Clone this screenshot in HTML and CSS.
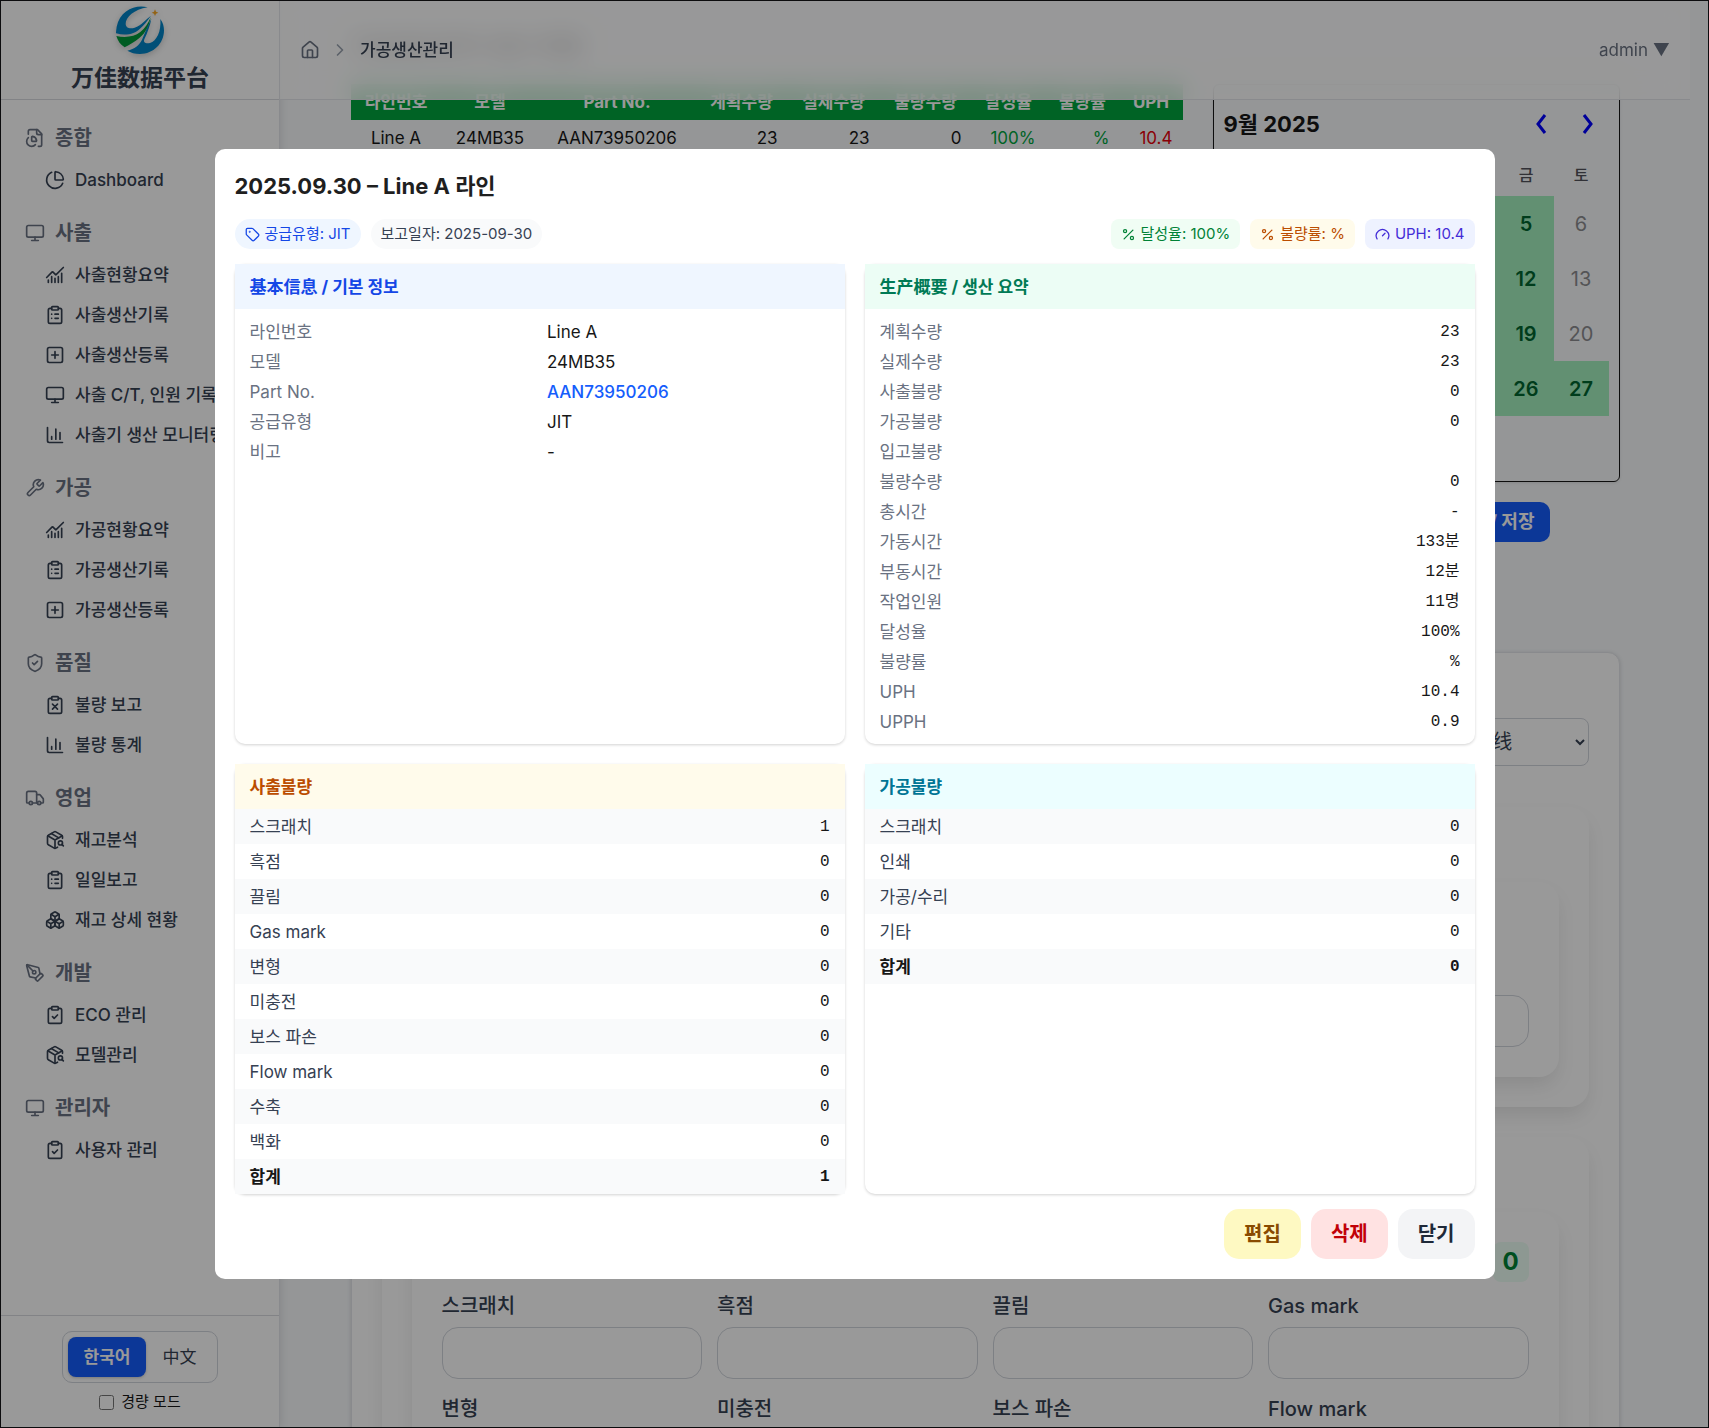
FILE: index.html
```html
<!DOCTYPE html>
<html lang="ko">
<head>
<meta charset="utf-8">
<title>万佳数据平台</title>
<link rel="stylesheet" href="styles.css">
</head>
<body>
<svg class="sprite" aria-hidden="true">
  <symbol id="i-file-pie" viewBox="0 0 24 24"><path d="M14 2v4a2 2 0 0 0 2 2h4"/><path d="M16 22h2a2 2 0 0 0 2-2V7l-5-5H6a2 2 0 0 0-2 2v3.5"/><path d="M4.017 11.512a6 6 0 1 0 8.466 8.475"/><path d="M9 16a1 1 0 0 1-1-1v-4c0-.552.45-1.008.995-.917a6 6 0 0 1 4.922 4.922c.091.544-.365.995-.917.995z"/></symbol>
  <symbol id="i-pie" viewBox="0 0 24 24"><path d="M21 12c.552 0 1.005-.449.95-.998a10 10 0 0 0-8.953-8.951c-.55-.055-.998.398-.998.95v8a1 1 0 0 0 1 1z"/><path d="M21.21 15.89A10 10 0 1 1 8 2.83"/></symbol>
  <symbol id="i-monitor" viewBox="0 0 24 24"><rect width="20" height="14" x="2" y="3" rx="2"/><path d="M8 21h8M12 17v4"/></symbol>
  <symbol id="i-trend" viewBox="0 0 24 24"><path d="M12 16v5M16 14v7M20 10v11"/><path d="m22 3-8.646 8.646a.5.5 0 0 1-.708 0L9.354 8.354a.5.5 0 0 0-.707 0L2 15"/><path d="M4 18v3M8 14v7"/></symbol>
  <symbol id="i-clip-list" viewBox="0 0 24 24"><rect width="8" height="4" x="8" y="2" rx="1"/><path d="M16 4h2a2 2 0 0 1 2 2v14a2 2 0 0 1-2 2H6a2 2 0 0 1-2-2V6a2 2 0 0 1 2-2h2"/><path d="M12 11h4M12 16h4M8 11h.01M8 16h.01"/></symbol>
  <symbol id="i-clip-check" viewBox="0 0 24 24"><rect width="8" height="4" x="8" y="2" rx="1"/><path d="M16 4h2a2 2 0 0 1 2 2v14a2 2 0 0 1-2 2H6a2 2 0 0 1-2-2V6a2 2 0 0 1 2-2h2"/><path d="m9 14 2 2 4-4"/></symbol>
  <symbol id="i-clip-x" viewBox="0 0 24 24"><rect width="8" height="4" x="8" y="2" rx="1"/><path d="M16 4h2a2 2 0 0 1 2 2v14a2 2 0 0 1-2 2H6a2 2 0 0 1-2-2V6a2 2 0 0 1 2-2h2"/><path d="m15 11-6 6M9 11l6 6"/></symbol>
  <symbol id="i-plus" viewBox="0 0 24 24"><rect width="18" height="18" x="3" y="3" rx="2"/><path d="M8 12h8M12 8v8"/></symbol>
  <symbol id="i-bars" viewBox="0 0 24 24"><path d="M3 3v16a2 2 0 0 0 2 2h16"/><path d="M18 17V9M13 17V5M8 17v-3"/></symbol>
  <symbol id="i-wrench" viewBox="0 0 24 24"><path d="M14.7 6.3a1 1 0 0 0 0 1.4l1.6 1.6a1 1 0 0 0 1.4 0l3.77-3.77a6 6 0 0 1-7.94 7.94l-6.91 6.91a2.12 2.12 0 0 1-3-3l6.91-6.91a6 6 0 0 1 7.94-7.94l-3.76 3.76z"/></symbol>
  <symbol id="i-shield" viewBox="0 0 24 24"><path d="M20 13c0 5-3.5 7.5-7.66 8.95a1 1 0 0 1-.67-.01C7.5 20.5 4 18 4 13V6a1 1 0 0 1 1-1c2 0 4.5-1.2 6.24-2.72a1.17 1.17 0 0 1 1.52 0C14.51 3.81 17 5 19 5a1 1 0 0 1 1 1z"/><path d="m9 12 2 2 4-4"/></symbol>
  <symbol id="i-truck" viewBox="0 0 24 24"><path d="M14 18V6a2 2 0 0 0-2-2H4a2 2 0 0 0-2 2v11a1 1 0 0 0 1 1h2"/><path d="M15 18H9"/><path d="M19 18h2a1 1 0 0 0 1-1v-3.65a1 1 0 0 0-.22-.624l-3.48-4.35A1 1 0 0 0 17.52 8H14"/><circle cx="17" cy="18" r="2"/><circle cx="7" cy="18" r="2"/></symbol>
  <symbol id="i-package" viewBox="0 0 24 24"><path d="M21 10V8a2 2 0 0 0-1-1.73l-7-4a2 2 0 0 0-2 0l-7 4A2 2 0 0 0 3 8v8a2 2 0 0 0 1 1.73l7 4a2 2 0 0 0 2 0l2-1.14"/><path d="m7.5 4.27 9 5.15"/><path d="M3.29 7 12 12l8.71-5M12 22V12"/><circle cx="18.5" cy="15.5" r="2.5"/><path d="M20.27 17.27 22 19"/></symbol>
  <symbol id="i-boxes" viewBox="0 0 24 24"><path d="M2.97 12.92A2 2 0 0 0 2 14.63v3.24a2 2 0 0 0 .97 1.71l3 1.8a2 2 0 0 0 2.06 0L12 19v-5.5l-5-3-4.03 2.42Z"/><path d="m7 16.5-4.74-2.85M7 16.5l5-3M7 16.5v5.17"/><path d="M12 13.5V19l3.97 2.38a2 2 0 0 0 2.06 0l3-1.8a2 2 0 0 0 .97-1.71v-3.24a2 2 0 0 0-.97-1.71L17 10.5l-5 3Z"/><path d="m17 16.5-5-3M17 16.5l4.74-2.85M17 16.5v5.17"/><path d="M7.97 4.42A2 2 0 0 0 7 6.13v4.37l5 3 5-3V6.13a2 2 0 0 0-.97-1.71l-3-1.8a2 2 0 0 0-2.06 0l-3 1.8Z"/><path d="M12 8 7.26 5.15M12 8l4.74-2.85M12 13.5V8"/></symbol>
  <symbol id="i-pen" viewBox="0 0 24 24"><path d="M15.707 21.293a1 1 0 0 1-1.414 0l-1.586-1.586a1 1 0 0 1 0-1.414l5.586-5.586a1 1 0 0 1 1.414 0l1.586 1.586a1 1 0 0 1 0 1.414z"/><path d="m18 13-1.375-6.874a1 1 0 0 0-.746-.776L3.235 2.028a1 1 0 0 0-1.207 1.207L5.35 15.879a1 1 0 0 0 .776.746L13 18"/><path d="m2.3 2.3 7.286 7.286"/><circle cx="11" cy="11" r="2"/></symbol>
  <symbol id="i-house" viewBox="0 0 24 24"><path d="M15 21v-8a1 1 0 0 0-1-1h-4a1 1 0 0 0-1 1v8"/><path d="M3 10a2 2 0 0 1 .709-1.528l7-5.999a2 2 0 0 1 2.582 0l7 5.999A2 2 0 0 1 21 10v9a2 2 0 0 1-2 2H5a2 2 0 0 1-2-2z"/></symbol>
  <symbol id="i-right" viewBox="0 0 24 24"><path d="m9 18 6-6-6-6"/></symbol>
  <symbol id="i-tag" viewBox="0 0 24 24"><path d="M12.586 2.586A2 2 0 0 0 11.172 2H4a2 2 0 0 0-2 2v7.172a2 2 0 0 0 .586 1.414l8.704 8.704a2.426 2.426 0 0 0 3.42 0l6.58-6.58a2.426 2.426 0 0 0 0-3.42z"/><circle cx="7.5" cy="7.5" r=".5"/></symbol>
  <symbol id="i-percent" viewBox="0 0 24 24"><path d="M19 5 5 19"/><circle cx="6.5" cy="6.5" r="2.5"/><circle cx="17.5" cy="17.5" r="2.5"/></symbol>
  <symbol id="i-gauge" viewBox="0 0 24 24"><path d="m12 14 4-4"/><path d="M3.34 19a10 10 0 1 1 17.32 0"/></symbol>
</svg>

<div class="app">
  <aside class="sidebar">
    <div class="brand">
      <svg class="brand-logo" viewBox="0 0 144 144" aria-hidden="true">
        <path fill="#0284c7" d="M95 4C60-6 12 12 2 62c-1 8-2 14-2 20 30 8 56 2 72-14 12-11 22-23 33-39C90 40 76 58 56 65c-14 4-27 1-27-12C29 34 54 10 95 4z"/>
        <path fill="#009a3a" d="M1 90c28 6 54 2 72-12 14-11 24-26 31-44-4 26-16 48-34 62-14 11-28 20-44 28C13 116 5 104 1 90z"/>
        <path fill="#0284c7" d="M106 38c-4 22-12 42-21 62-4 10 5 14 17 11 20-6 34-34 31-72 8 11 11 22 11 34 0 40-32 71-72 71-15 0-28-4-38-10 22-6 36-16 44-33 8-19 16-40 28-63z"/>
        <path fill="#f5a623" d="M117 10l3 7 7 3-7 3-3 7-3-7-7-3 7-3z"/>
      </svg>
      <h1 class="brand-name">万佳数据平台</h1>
    </div>
    <nav class="nav">
      <section>
        <h2><svg class="icon"><use href="#i-file-pie"/></svg>종합</h2>
        <a href="#"><svg class="icon"><use href="#i-pie"/></svg>Dashboard</a>
      </section>
      <section>
        <h2><svg class="icon"><use href="#i-monitor"/></svg>사출</h2>
        <a href="#"><svg class="icon"><use href="#i-trend"/></svg>사출현황요약</a>
        <a href="#"><svg class="icon"><use href="#i-clip-list"/></svg>사출생산기록</a>
        <a href="#"><svg class="icon"><use href="#i-plus"/></svg>사출생산등록</a>
        <a href="#"><svg class="icon"><use href="#i-monitor"/></svg>사출 C/T, 인원 기록</a>
        <a href="#"><svg class="icon"><use href="#i-bars"/></svg>사출기 생산 모니터링</a>
      </section>
      <section>
        <h2><svg class="icon"><use href="#i-wrench"/></svg>가공</h2>
        <a href="#"><svg class="icon"><use href="#i-trend"/></svg>가공현황요약</a>
        <a href="#"><svg class="icon"><use href="#i-clip-list"/></svg>가공생산기록</a>
        <a href="#"><svg class="icon"><use href="#i-plus"/></svg>가공생산등록</a>
      </section>
      <section>
        <h2><svg class="icon"><use href="#i-shield"/></svg>품질</h2>
        <a href="#"><svg class="icon"><use href="#i-clip-x"/></svg>불량 보고</a>
        <a href="#"><svg class="icon"><use href="#i-bars"/></svg>불량 통계</a>
      </section>
      <section>
        <h2><svg class="icon"><use href="#i-truck"/></svg>영업</h2>
        <a href="#"><svg class="icon"><use href="#i-package"/></svg>재고분석</a>
        <a href="#"><svg class="icon"><use href="#i-clip-list"/></svg>일일보고</a>
        <a href="#"><svg class="icon"><use href="#i-boxes"/></svg>재고 상세 현황</a>
      </section>
      <section>
        <h2><svg class="icon"><use href="#i-pen"/></svg>개발</h2>
        <a href="#"><svg class="icon"><use href="#i-clip-check"/></svg>ECO 관리</a>
        <a href="#"><svg class="icon"><use href="#i-package"/></svg>모델관리</a>
      </section>
      <section>
        <h2><svg class="icon"><use href="#i-monitor"/></svg>관리자</h2>
        <a href="#"><svg class="icon"><use href="#i-clip-check"/></svg>사용자 관리</a>
      </section>
    </nav>
    <div class="side-foot">
      <div class="lang">
        <button type="button" class="lang-on">한국어</button>
        <button type="button">中文</button>
      </div>
      <label class="light-mode"><input type="checkbox">경량 모드</label>
    </div>
  </aside>

  <div class="main">
    <header class="topbar">
      <nav class="crumbs">
        <a href="#" aria-label="Home"><svg class="icon"><use href="#i-house"/></svg></a>
        <svg class="icon crumb-sep"><use href="#i-right"/></svg>
        <span>가공생산관리</span>
      </nav>
      <button type="button" class="user">admin ▼</button>
    </header>

    <main class="page">
      <h2 class="page-title">가공생산관리 생산 현황</h2>
      <div class="overview">
        <table class="records">
          <colgroup><col class="c-line"><col class="c-model"><col class="c-part"><col class="c-qty"><col class="c-qty"><col class="c-qty"><col class="c-rate"><col class="c-rate"><col></colgroup>
          <thead><tr><th>라인번호</th><th>모델</th><th>Part No.</th><th>계획수량</th><th>실제수량</th><th>불량수량</th><th>달성율</th><th>불량률</th><th>UPH</th></tr></thead>
          <tbody><tr><td>Line A</td><td>24MB35</td><td>AAN73950206</td><td class="num">23</td><td class="num">23</td><td class="num">0</td><td class="num good">100%</td><td class="num good">%</td><td class="num bad">10.4</td></tr></tbody>
        </table>
        <section class="calendar">
          <div class="cal-head">
            <strong>9월 2025</strong>
            <div class="cal-nav">
              <button type="button" aria-label="이전 달"><svg viewBox="0 0 12 20"><path d="M10 1 3 10l7 9"/></svg></button>
              <button type="button" aria-label="다음 달"><svg viewBox="0 0 12 20"><path d="m2 1 7 9-7 9"/></svg></button>
            </div>
          </div>
          <table class="days">
            <thead><tr><th>일</th><th>월</th><th>화</th><th>수</th><th>목</th><th>금</th><th>토</th></tr></thead>
            <tbody>
              <tr><td></td><td class="has">1</td><td class="has">2</td><td class="has">3</td><td class="has">4</td><td class="has">5</td><td>6</td></tr>
              <tr><td>7</td><td class="has">8</td><td class="has">9</td><td class="has">10</td><td class="has">11</td><td class="has">12</td><td>13</td></tr>
              <tr><td>14</td><td class="has">15</td><td class="has">16</td><td class="has">17</td><td class="has">18</td><td class="has">19</td><td>20</td></tr>
              <tr><td>21</td><td class="has">22</td><td class="has">23</td><td class="has">24</td><td class="has">25</td><td class="has">26</td><td class="has">27</td></tr>
              <tr><td>28</td><td class="has">29</td><td class="has">30</td><td></td><td></td><td></td><td></td></tr>
            </tbody>
          </table>
        </section>
      </div>
      <div class="page-actions"><button type="button" class="save">保存 / 저장</button></div>

      <form class="editor">
        <div class="editor-top">
          <select aria-label="생산라인"><option>라인 선택 / 选择生产线</option></select>
        </div>
        <section class="panel">
          <div class="panel-body panel-short"><input type="text" aria-label="비고"></div>
        </section>
        <section class="panel">
          <div class="panel-body">
            <output class="sum">0</output>
            <div class="fields">
              <label>스크래치<input type="text"></label>
              <label>흑점<input type="text"></label>
              <label>끌림<input type="text"></label>
              <label>Gas mark<input type="text"></label>
              <label>변형<input type="text"></label>
              <label>미충전<input type="text"></label>
              <label>보스 파손<input type="text"></label>
              <label>Flow mark<input type="text"></label>
            </div>
          </div>
        </section>
      </form>
    </main>
  </div>

  <div class="overlay">
    <div class="dialog" role="dialog" aria-modal="true" aria-labelledby="dlg-title">
      <h2 class="dlg-title" id="dlg-title">2025.09.30 – Line A 라인</h2>
      <div class="chips">
        <div class="chip-set">
          <span class="chip pill blue"><svg class="icon"><use href="#i-tag"/></svg>공급유형: JIT</span>
          <span class="chip pill gray">보고일자: 2025-09-30</span>
        </div>
        <div class="chip-set">
          <span class="chip green"><svg class="icon"><use href="#i-percent"/></svg>달성율: 100%</span>
          <span class="chip amber"><svg class="icon"><use href="#i-percent"/></svg>불량률: %</span>
          <span class="chip indigo"><svg class="icon"><use href="#i-gauge"/></svg>UPH: 10.4</span>
        </div>
      </div>
      <div class="cards">
        <section class="card">
          <h3 class="h-blue">基本信息 / 기본 정보</h3>
          <dl class="info">
            <dt>라인번호</dt><dd>Line A</dd>
            <dt>모델</dt><dd>24MB35</dd>
            <dt>Part No.</dt><dd class="part">AAN73950206</dd>
            <dt>공급유형</dt><dd>JIT</dd>
            <dt>비고</dt><dd>-</dd>
          </dl>
        </section>
        <section class="card">
          <h3 class="h-green">生产概要 / 생산 요약</h3>
          <dl class="info info-num">
            <dt>계획수량</dt><dd>23</dd>
            <dt>실제수량</dt><dd>23</dd>
            <dt>사출불량</dt><dd>0</dd>
            <dt>가공불량</dt><dd>0</dd>
            <dt>입고불량</dt><dd></dd>
            <dt>불량수량</dt><dd>0</dd>
            <dt>총시간</dt><dd>-</dd>
            <dt>가동시간</dt><dd>133분</dd>
            <dt>부동시간</dt><dd>12분</dd>
            <dt>작업인원</dt><dd>11명</dd>
            <dt>달성율</dt><dd>100%</dd>
            <dt>불량률</dt><dd>%</dd>
            <dt>UPH</dt><dd>10.4</dd>
            <dt>UPPH</dt><dd>0.9</dd>
          </dl>
        </section>
        <section class="card">
          <h3 class="h-amber">사출불량</h3>
          <table class="defects">
            <tr><th>스크래치</th><td>1</td></tr>
            <tr><th>흑점</th><td>0</td></tr>
            <tr><th>끌림</th><td>0</td></tr>
            <tr><th>Gas mark</th><td>0</td></tr>
            <tr><th>변형</th><td>0</td></tr>
            <tr><th>미충전</th><td>0</td></tr>
            <tr><th>보스 파손</th><td>0</td></tr>
            <tr><th>Flow mark</th><td>0</td></tr>
            <tr><th>수축</th><td>0</td></tr>
            <tr><th>백화</th><td>0</td></tr>
            <tr class="total"><th>합계</th><td>1</td></tr>
          </table>
        </section>
        <section class="card">
          <h3 class="h-cyan">가공불량</h3>
          <table class="defects">
            <tr><th>스크래치</th><td>0</td></tr>
            <tr><th>인쇄</th><td>0</td></tr>
            <tr><th>가공/수리</th><td>0</td></tr>
            <tr><th>기타</th><td>0</td></tr>
            <tr class="total"><th>합계</th><td>0</td></tr>
          </table>
        </section>
      </div>
      <div class="dlg-actions">
        <button type="button" class="edit">편집</button>
        <button type="button" class="delete">삭제</button>
        <button type="button" class="close">닫기</button>
      </div>
    </div>
  </div>
</div>
</body>
</html>
```
FILE: styles.css
```css
*, *::before, *::after { box-sizing: border-box; }
body, h1, h2, h3, dl, dd { margin: 0; }
body {
  background: #0c0c0e;
  color: #171717;
  font: 17px/30px Inter, "Noto Sans CJK KR", "Noto Sans CJK SC", sans-serif;
}
button, input, select { font: inherit; color: inherit; }
button { border: 0; padding: 0; background: none; cursor: pointer; }
a { color: inherit; text-decoration: none; }
table { border-collapse: collapse; border-spacing: 0; }
.sprite { display: none; }
.icon {
  width: 20px; height: 20px; flex: none;
  fill: none; stroke: currentColor; stroke-width: 2;
  stroke-linecap: round; stroke-linejoin: round;
}

.app {
  position: relative;
  display: flex;
  height: 100vh;
  border: 1px solid #0c0c0e;
  overflow: hidden;
  background: #f8fafc;
}

/* Sidebar */
.sidebar {
  display: flex; flex-direction: column;
  width: 279px; flex: none;
  background: #fff;
  border-right: 1px solid #e5e7eb;
  box-shadow: 1px 0 8px rgba(0, 0, 0, .1);
  z-index: 1;
}
.brand {
  display: flex; flex-direction: column; align-items: center;
  height: 99px; padding-top: 5px;
  border-bottom: 1px solid #d9dbe0;
}
.brand-logo { width: 48px; height: 48px; filter: drop-shadow(0 2px 3px rgba(0, 0, 0, .2)); }
.brand-name {
  margin-top: 7px;
  color: #364153;
  font: 700 23px/30px "Noto Sans CJK SC", sans-serif;
}
.nav { flex: 1; padding: 15px 24px 0; overflow: hidden; white-space: nowrap; }
.nav section { margin-bottom: 10px; }
.nav h2 {
  display: flex; align-items: center; gap: 10px;
  height: 45px;
  color: #6a7282; font-size: 20px; font-weight: 600;
}
.nav a {
  display: flex; align-items: center; gap: 10px;
  height: 40px; padding-left: 20px;
  color: #364153; font-weight: 500;
}
.side-foot {
  display: flex; flex-direction: column; align-items: center; gap: 8px;
  padding: 15px 0 14px;
  border-top: 1px solid #d9dbe0;
}
.lang {
  display: flex;
  padding: 5px;
  border: 1px solid #d1d5dc; border-radius: 10px;
  color: #364153;
}
.lang button { height: 40px; padding: 0 16px; border-radius: 8px; }
.lang .lang-on { background: #155dfc; color: #fff; font-weight: 600; box-shadow: 0 1px 3px rgba(0, 0, 0, .2); }
.light-mode { display: flex; align-items: center; gap: 7px; font-size: 15px; line-height: 22px; }
.light-mode input { width: 15px; height: 15px; margin: 0; }

/* Main column */
.main { position: relative; flex: 1; min-width: 0; padding-right: 18px; overflow: hidden; }
.topbar {
  position: absolute; inset: 0 18px auto 0;
  display: flex; align-items: center; justify-content: space-between;
  height: 99px; padding: 0 20px;
  background: rgba(255, 255, 255, .8);
  border-bottom: 1px solid #e5e7eb;
  backdrop-filter: blur(12px);
  color: #6a7282;
  z-index: 1;
}
.crumbs { display: flex; align-items: center; gap: 10px; color: #364153; font-weight: 500; }
.crumbs .icon { display: block; color: #6a7282; }
.crumbs .crumb-sep { color: #99a1af; }
.page { width: 90%; margin: 0 auto; }
.page-title { height: 83px; padding-top: 30px; font-size: 24px; line-height: 32px; font-weight: 700; }
.overview { display: grid; grid-template-columns: 1fr 407px; gap: 30px; align-items: start; }
.records { width: 100%; table-layout: fixed; text-align: center; }
.records tr { height: 36px; }
.records th { padding: 0; background: #00a63e; color: #fff; font-weight: 700; }
.records td { padding: 0 10px; }
.records td:nth-child(-n+3) { padding: 0; }
.records .num { text-align: right; }
.records .good { color: #00a63e; }
.records .bad { color: #e7000b; }
.c-line { width: 91px; }
.c-model { width: 97px; }
.c-part { width: 157px; }
.c-qty { width: 92px; }
.c-rate { width: 74px; }

.calendar {
  padding: 10px;
  border: 1px solid #171717; border-radius: 6px;
  box-shadow: 0 1px 3px rgba(0, 0, 0, .1);
}
.cal-head { display: flex; align-items: center; justify-content: space-between; height: 58px; font-size: 22px; }
.cal-nav { display: flex; gap: 5px; }
.cal-nav button { display: grid; place-items: center; width: 42px; height: 40px; }
.cal-nav svg { width: 12px; height: 20px; fill: none; stroke: #0000ff; stroke-width: 3; }
.days { width: 100%; table-layout: fixed; text-align: center; }
.days th { height: 43px; padding: 0; font-size: 16px; font-weight: 500; color: #52525b; }
.days td { height: 55px; padding: 0; font-size: 20px; color: #8d8d90; }
.days .has { background: #a3f1bf; color: #016630; font-weight: 600; }
.page-actions { display: flex; justify-content: flex-end; padding: 20px 70px 0 0; }
.save { height: 40px; padding: 0 15px; border-radius: 10px; background: #155dfc; color: #fff; font-size: 18px; font-weight: 700; }

.editor {
  margin-top: 110px; padding: 65px 30px 30px;
  background: #fff;
  border: 1px solid #e5e7eb; border-radius: 12px;
  box-shadow: 0 1px 4px rgba(0, 0, 0, .15);
}
.editor-top { display: flex; justify-content: flex-end; margin-bottom: 41px; }
.editor-top select {
  width: 291px; height: 48px; padding: 0 12px;
  background: #fff; border: 1px solid #d1d5dc; border-radius: 8px;
  color: #364153; font-size: 20px;
}
.panel {
  margin-bottom: 30px; padding: 75px 30px 30px;
  border-radius: 20px;
  box-shadow: 0 10px 20px -3px rgba(0, 0, 0, .1);
}
.panel-body { padding: 30px; border-radius: 20px; box-shadow: 0 10px 20px -3px rgba(0, 0, 0, .1); }
.panel-short { padding-top: 113px; }
.panel-body input {
  display: block; width: 100%; height: 52px;
  background: #fff; border: 1px solid #d1d5dc; border-radius: 16px;
}
.sum {
  display: block; width: 36px; margin-left: auto;
  background: #ecfdf3; border-radius: 8px;
  color: #008236; font-size: 24px; line-height: 40px; font-weight: 700; text-align: center;
}
.fields { display: grid; grid-template-columns: repeat(4, 1fr); gap: 15px; margin-top: 9px; }
.fields label { display: grid; gap: 6px; color: #364153; font-size: 20px; line-height: 30px; font-weight: 500; }

/* Record detail dialog */
.overlay {
  position: absolute; inset: 0;
  display: flex; align-items: center; justify-content: center;
  background: rgba(0, 0, 0, .4);
  z-index: 2;
}
.dialog { width: 1280px; max-width: 95%; padding: 20px; background: #fff; border-radius: 10px; }
.dlg-title { margin-bottom: 15px; font-size: 22px; line-height: 35px; font-weight: 700; color: #1f1f1f; }
.chips, .chip-set { display: flex; gap: 10px; }
.chips { justify-content: space-between; margin-bottom: 15px; }
.chip {
  display: flex; align-items: center; gap: 5px;
  height: 30px; padding: 0 10px; border-radius: 8px;
  font-size: 15px; white-space: nowrap;
}
.chip .icon { width: 15px; height: 15px; }
.pill { border-radius: 15px; }
.blue { background: #eff6ff; color: #1447e6; }
.gray { background: #f9fafb; color: #364153; }
.green { background: #f0fdf4; color: #008236; }
.amber { background: #fffbeb; color: #bb4d00; }
.indigo { background: #eef2ff; color: #432dd7; }
.cards { display: grid; grid-template-columns: 1fr 1fr; gap: 20px; }
.card { border-radius: 10px; box-shadow: 0 1px 3px rgba(0, 0, 0, .18); }
.card h3 { padding: 1px 15px 0; font-size: 17px; line-height: 44px; font-weight: 700; }
.h-blue { background: #eff6ff; color: #1447e6; }
.h-green { background: #ecfdf5; color: #007a55; }
.h-amber { background: #fffbeb; color: #bb4d00; }
.h-cyan { background: #ecfeff; color: #007595; }
.info { display: grid; grid-template-columns: 1fr 1fr; column-gap: 15px; padding: 8px 15px 7px; }
.info dt { color: #6a7282; }
.info dd { min-height: 30px; }
.info .part { color: #155dfc; font-weight: 500; }
.info-num dd, .defects td {
  font-family: "Liberation Mono", "Noto Sans CJK KR", monospace;
  font-size: 16px;
  text-align: right;
}
.defects { width: 100%; }
.defects tr { height: 35px; }
.defects tr:nth-child(odd) { background: #f9fafb; }
.defects th { padding: 0 15px; text-align: left; font-weight: 400; color: #364153; }
.defects td { padding: 0 15px; }
.defects .total th, .defects .total td { color: #171717; font-weight: 700; }
.dlg-actions { display: flex; justify-content: flex-end; gap: 10px; margin-top: 15px; }
.dlg-actions button { height: 50px; padding: 0 20px; border-radius: 15px; font-size: 20px; font-weight: 600; }
.edit { background: #fef9c2; color: #894b00; }
.delete { background: #ffe2e2; color: #c10007; }
.close { background: #f3f4f6; color: #1e2939; }
```
